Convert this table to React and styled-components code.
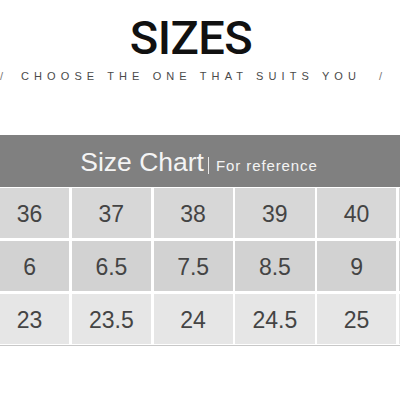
import React from "react";
import styled, { createGlobalStyle } from "styled-components";

const GlobalStyle = createGlobalStyle`
  body {
    margin: 0;
    background: #ffffff;
    font-family: "Liberation Sans", Arial, sans-serif;
    overflow: hidden;
  }
`;

const Page = styled.div`
  width: 400px;
  height: 400px;
  overflow: hidden;
  background: #fff;
`;

const Intro = styled.div`
  display: flex;
  flex-direction: column;
  align-items: center;
  padding-right: 18px;
  padding-top: 14px;
`;

const Title = styled.h1`
  margin: 0;
  font-family: Roboto, "Liberation Sans", sans-serif;
  font-weight: 500;
  font-size: 47px;
  line-height: 47px;
  letter-spacing: -0.5px;
  color: #111;
`;

const Tagline = styled.div`
  display: flex;
  align-items: center;
  gap: 18px;
  margin-top: 9px;
  font-size: 11px;
  line-height: 12px;
  color: #4a4a4a;
  letter-spacing: 5.1px;
  white-space: nowrap;
  flex-shrink: 0;
`;

const Slash = styled.span`
  letter-spacing: 0;
  color: #777;
`;

const Chart = styled.div`
  margin-top: 53px;
`;

const Band = styled.div`
  height: 52px;
  background: #808080;
  display: flex;
  align-items: baseline;
  justify-content: center;
  padding-top: 12px;
  padding-right: 2px;
  box-sizing: border-box;
  color: #f4f4f4;
`;

const BandTitle = styled.span`
  font-size: 26.5px;
`;

const BandNote = styled.span`
  font-size: 15px;
  letter-spacing: 0.9px;
  margin-left: 4px;
  border-left: 1px solid #e8e8e8;
  padding-left: 7px;
`;

const Grid = styled.div`
  margin-left: -10px;
  margin-top: 1px;
  display: grid;
  grid-template-columns: repeat(6, 79.25px);
  grid-auto-rows: 50px;
  gap: 3px 2.5px;
  border-bottom: 1px solid #c8c8c8;
  padding-bottom: 1px;
  width: max-content;
`;

const Cell = styled.div`
  background: ${(p) => p.$bg};
  display: flex;
  align-items: center;
  justify-content: center;
  font-size: 23px;
  color: #444;
  padding-top: 3px;
  box-sizing: border-box;
`;

// last column runs past the right edge, so its values are not shown
const rows = [
  { bg: "#d7d7d7", values: ["36", "37", "38", "39", "40", ""] },
  { bg: "#d2d2d2", values: ["6", "6.5", "7.5", "8.5", "9", ""] },
  { bg: "#e6e6e6", values: ["23", "23.5", "24", "24.5", "25", ""] },
];

export default function App() {
  return (
    <Page>
      <GlobalStyle />
      <Intro>
        <Title>SIZES</Title>
        <Tagline>
          <Slash>/</Slash>
          <span>CHOOSE THE ONE THAT SUITS YOU</span>
          <Slash>/</Slash>
        </Tagline>
      </Intro>
      <Chart>
        <Band>
          <BandTitle>Size Chart</BandTitle>
          <BandNote>For reference</BandNote>
        </Band>
        <Grid>
          {rows.map((r, i) =>
            r.values.map((v, j) => (
              <Cell key={i + "-" + j} $bg={r.bg}>
                {v}
              </Cell>
            ))
          )}
        </Grid>
      </Chart>
    </Page>
  );
}
